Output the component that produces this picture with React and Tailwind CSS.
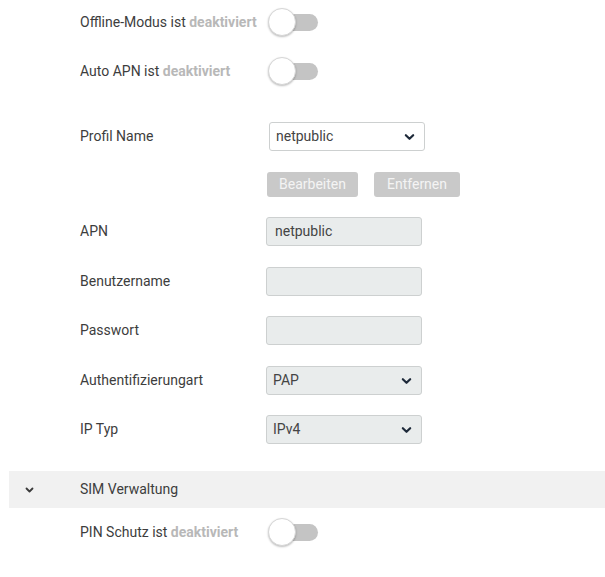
import React, { useState } from "react";

const Chevron = ({ className }) => (
    <svg className={className} viewBox="0 0 12 8" fill="none" stroke="currentColor" strokeWidth="2.4" strokeLinecap="round" strokeLinejoin="round">
        <path d="M2 2l4 4 4-4" />
    </svg>
);

const Toggle = ({ on }) => (
    <div className="relative w-[50px] h-[28px] flex items-center">
        <div className="absolute left-[12px] right-0 h-[17px] rounded-full bg-[#c4c4c4]" />
        <div className="absolute left-0 top-0 w-[28px] h-[28px] rounded-full bg-white border border-[#d6d6d6] shadow-[0_1px_2px_rgba(0,0,0,0.25)]" />
    </div>
);

const ToggleRow = ({ label, className = "" }) => (
    <div className={"flex items-center h-[28px] " + className}>
        <div className="w-[188px] text-[14px] text-[#3d3d3d]">
            {label} ist <span className="font-bold text-[#b8b8b8]">deaktiviert</span>
        </div>
        <Toggle />
    </div>
);

const Field = ({ label, children, className = "" }) => (
    <div className={"flex items-center h-[29px] " + className}>
        <div className="w-[186px] text-[14px] text-[#3d3d3d]">{label}</div>
        {children}
    </div>
);

const Input = ({ value }) => (
    <div className="w-[156px] h-[29px] rounded-[3px] border border-[#cdd0d0] bg-[#e9ecec] px-[8px] flex items-center text-[14px] text-[#444]">
        {value}
    </div>
);

const Select = ({ value, white }) => (
    <div className={"w-[156px] h-[29px] rounded-[3px] border border-[#cdd0d0] px-[6px] flex items-center justify-between text-[14px] text-[#444] " + (white ? "bg-white ml-[3px]" : "bg-[#e9ecec]")}>
        <span>{value}</span>
        <Chevron className="w-[11px] h-[8px] mr-[3px] text-[#1e2a3a]" />
    </div>
);

export default function App() {
    const [profil] = useState("netpublic");

    return (
        <div className="w-[605px] h-[577px] bg-white overflow-hidden font-['Roboto',sans-serif]">
            <div className="pl-[80px] pt-[8px]">
                <ToggleRow label="Offline-Modus" />
                <ToggleRow label="Auto APN" className="mt-[21px]" />

                <Field label="Profil Name" className="mt-[37px]">
                    <Select value={profil} white />
                </Field>

                <div className="flex gap-[16px] ml-[187px] mt-[21px]">
                    <button className="h-[25px] w-[91px] rounded-[3px] bg-[#c9c9c9] text-[14px] text-[#f4f4f4]">Bearbeiten</button>
                    <button className="h-[25px] w-[86px] rounded-[3px] bg-[#c9c9c9] text-[14px] text-[#f4f4f4]">Entfernen</button>
                </div>

                <Field label="APN" className="mt-[20px]">
                    <Input value="netpublic" />
                </Field>
                <Field label="Benutzername" className="mt-[21px]">
                    <Input value="" />
                </Field>
                <Field label="Passwort" className="mt-[20px]">
                    <Input value="" />
                </Field>
                <Field label="Authentifizierungart" className="mt-[21px]">
                    <Select value="PAP" />
                </Field>
                <Field label="IP Typ" className="mt-[20px]">
                    <Select value="IPv4" />
                </Field>
            </div>

            <div className="ml-[9px] mt-[27px] h-[37px] bg-[#f1f1f1] flex items-center">
                <div className="w-[71px] pl-[16px]">
                    <Chevron className="w-[9px] h-[6px] text-[#3a3a3a]" />
                </div>
                <span className="text-[14px] text-[#3d3d3d]">SIM Verwaltung</span>
            </div>

            <div className="pl-[80px] mt-[10px]">
                <ToggleRow label="PIN Schutz" />
            </div>
        </div>
    );
}
